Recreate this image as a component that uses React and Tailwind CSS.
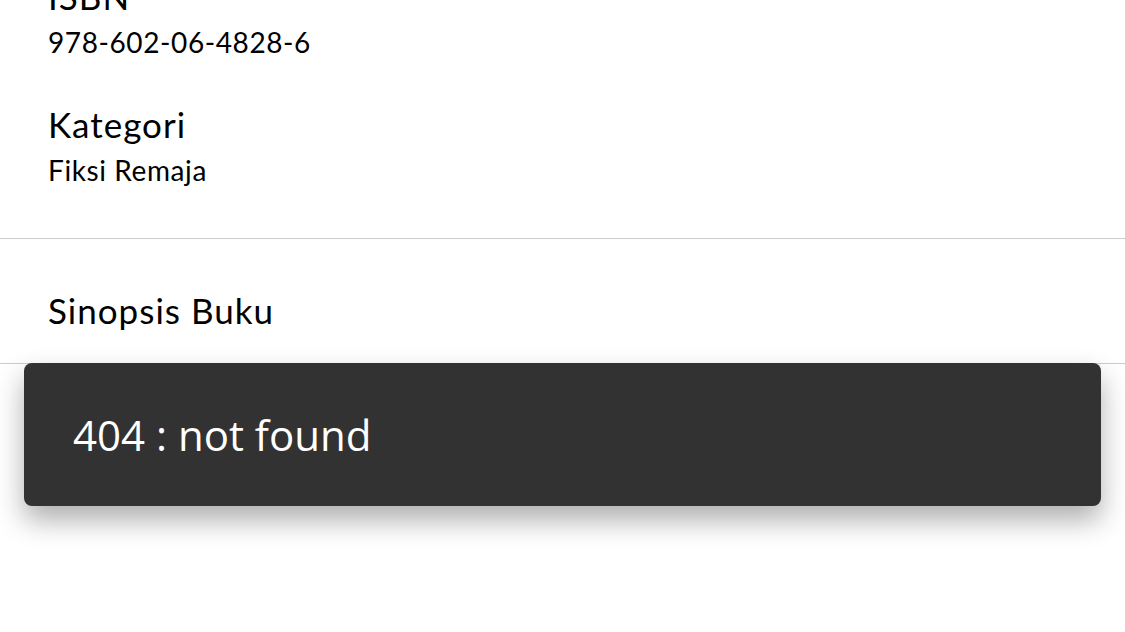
import React from 'react';

const Field = ({ label, value, className = '' }) => (
    <div className={className}>
        <h3 className="text-[35px] leading-[40px] tracking-[1px] text-black">{label}</h3>
        <p className="mt-2.5 text-[28px] leading-[32px] tracking-[0.6px] text-black">{value}</p>
    </div>
);

const App = () => {
    return (
        <div className="relative w-full h-[632px] overflow-hidden bg-white" style={{ fontFamily: 'Lato, "Noto Sans", sans-serif' }}>
            <div className="-mt-[24px] px-12 pb-[52px] border-b border-[#cccccc]">
                <Field label="ISBN" value="978-602-06-4828-6" />
                <Field label="Kategori" value="Fiksi Remaja" className="mt-[46px]" />
            </div>
            <div className="px-12 pt-[51px] pb-[33px] border-b border-[#cccccc]">
                <h3 className="text-[35px] leading-[40px] tracking-[1px] text-black">Sinopsis Buku</h3>
            </div>

            {/* snackbar */}
            <div className="absolute left-6 right-6 top-[363px] h-[143px] rounded-lg bg-[#323232] flex items-center px-[49px] shadow-[0_14px_28px_rgba(0,0,0,0.32)]">
                <span className="text-white text-[42px] leading-none" style={{ fontFamily: '"Open Sans", "Noto Sans", sans-serif' }}>
                    404 : not found
                </span>
            </div>
        </div>
    );
};

export default App;
